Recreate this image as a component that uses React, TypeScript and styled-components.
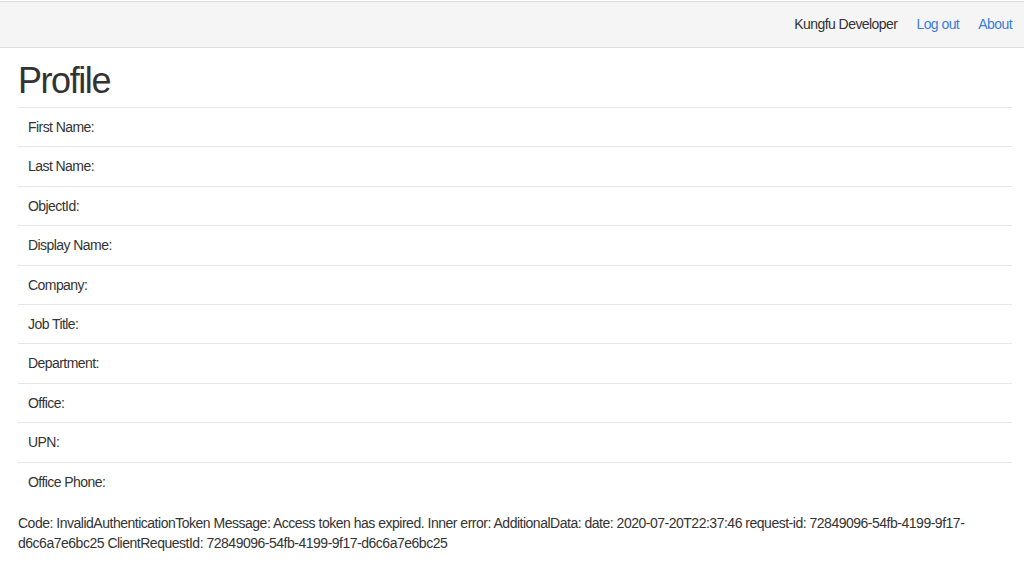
import React from 'react';
import styled, { createGlobalStyle } from 'styled-components';

const GlobalStyle = createGlobalStyle`
  html, body {
    margin: 0;
    padding: 0;
    background: #ffffff;
  }
  body {
    font-family: "Liberation Sans", Arial, Helvetica, sans-serif;
    font-size: 14px;
    line-height: 20px;
    letter-spacing: -0.04em;
    color: #333333;
  }
`;

// Top navigation bar
const Navbar = styled.nav`
  box-sizing: border-box;
  margin-top: 1px;
  height: 47px;
  background: #f5f5f5;
  border-top: 1px solid #dcdcdc;
  border-bottom: 1px solid #dddddd;
  display: flex;
  align-items: center;
  justify-content: flex-end;
  padding: 0 12px 1px 0;
  gap: 19px;
`;

const NavText = styled.span`
  color: #333333;
`;

const NavLink = styled.a`
  color: #3b7ed8;
  text-decoration: none;
  cursor: pointer;

  &:hover {
    text-decoration: underline;
  }
`;

const Container = styled.main`
  padding: 0 12px 0 18px;
`;

const Title = styled.h1`
  font-size: 36px;
  font-weight: 400;
  line-height: 40px;
  letter-spacing: -0.04em;
  margin: 13px 0 6px;
  color: #333333;
`;

const Table = styled.table`
  width: 100%;
  border-collapse: collapse;
  margin-bottom: 12px;
`;

const Cell = styled.td`
  padding: 8px 10px;
  line-height: 22.4px;
  border-top: 1px solid #e6e6e6;
`;

const ErrorText = styled.p`
  margin: 0;
  line-height: 20px;
  letter-spacing: -0.035em;
`;

const fields = [
  'First Name:',
  'Last Name:',
  'ObjectId:',
  'Display Name:',
  'Company:',
  'Job Title:',
  'Department:',
  'Office:',
  'UPN:',
  'Office Phone:',
];

export default function App() {
  return (
    <>
      <GlobalStyle />
      <Navbar>
        <NavText>Kungfu Developer</NavText>
        <NavLink>Log out</NavLink>
        <NavLink>About</NavLink>
      </Navbar>
      <Container>
        <Title>Profile</Title>
        <Table>
          <tbody>
            {fields.map((f) => (
              <tr key={f}>
                <Cell>{f}</Cell>
              </tr>
            ))}
          </tbody>
        </Table>
        <ErrorText>
          Code: InvalidAuthenticationToken Message: Access token has expired. Inner error: AdditionalData: date:
          2020-07-20T22:37:46 request-id: 72849096-54fb-4199-9f17-d6c6a7e6bc25 ClientRequestId:
          72849096-54fb-4199-9f17-d6c6a7e6bc25
        </ErrorText>
      </Container>
    </>
  );
}
